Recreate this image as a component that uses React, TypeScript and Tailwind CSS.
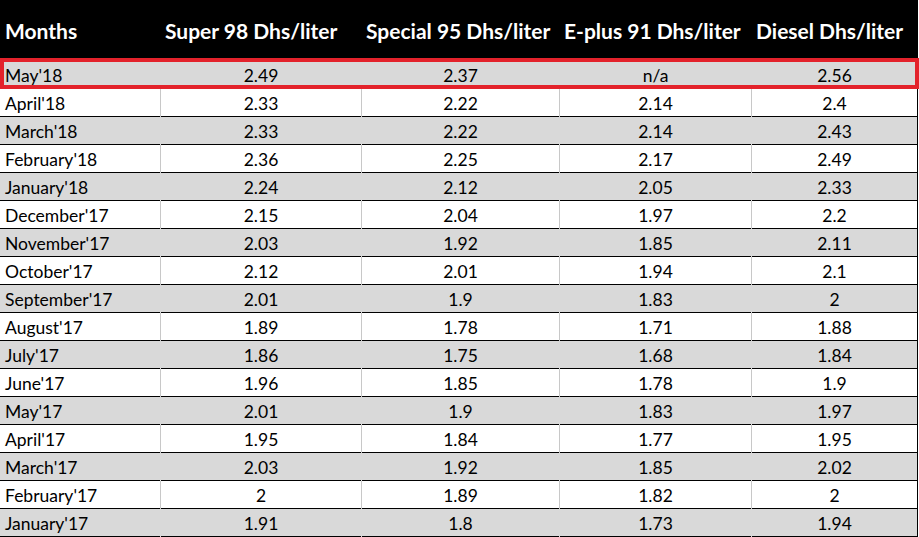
const headers = ['Months', 'Super 98 Dhs/liter', 'Special 95 Dhs/liter', 'E-plus 91 Dhs/liter', 'Diesel Dhs/liter'];

const rows: string[][] = [
  ["May'18", '2.49', '2.37', 'n/a', '2.56'],
  ["April'18", '2.33', '2.22', '2.14', '2.4'],
  ["March'18", '2.33', '2.22', '2.14', '2.43'],
  ["February'18", '2.36', '2.25', '2.17', '2.49'],
  ["January'18", '2.24', '2.12', '2.05', '2.33'],
  ["December'17", '2.15', '2.04', '1.97', '2.2'],
  ["November'17", '2.03', '1.92', '1.85', '2.11'],
  ["October'17", '2.12', '2.01', '1.94', '2.1'],
  ["September'17", '2.01', '1.9', '1.83', '2'],
  ["August'17", '1.89', '1.78', '1.71', '1.88'],
  ["July'17", '1.86', '1.75', '1.68', '1.84'],
  ["June'17", '1.96', '1.85', '1.78', '1.9'],
  ["May'17", '2.01', '1.9', '1.83', '1.97'],
  ["April'17", '1.95', '1.84', '1.77', '1.95'],
  ["March'17", '2.03', '1.92', '1.85', '2.02'],
  ["February'17", '2', '1.89', '1.82', '2'],
  ["January'17", '1.91', '1.8', '1.73', '1.94'],
];

const cols = 'grid grid-cols-[160px_201px_198px_192px_166px]';

export default function App() {
  return (
    <div className="relative w-[919px] h-[537px] bg-white overflow-hidden font-['Lato','Open_Sans',sans-serif] text-black">
      <div className={`${cols} h-[61px] w-[918px] bg-black text-white font-bold text-[21px]`}>
        {headers.map((h) => (
          <div key={h} className="flex items-center pl-[5px] whitespace-nowrap">
            {h}
          </div>
        ))}
      </div>

      {rows.map((r, i) => {
        const shaded = i % 2 === 0;
        return (
          <div
            key={r[0]}
            className={`${cols} h-[28px] w-[918px] border-b border-r border-black text-[17.5px] ${
              shaded ? 'bg-[#d9d9d9]' : 'bg-white'
            }`}
          >
            <div className="flex items-center pt-[2px] pl-[5px] whitespace-nowrap">{r[0]}</div>
            {r.slice(1).map((v, j) => (
              <div
                key={j}
                className={`flex items-center justify-center pt-[2px] border-l ${
                  shaded ? 'border-[#d9d9d9]' : 'border-[#c8c8c8]'
                }`}
              >
                {v}
              </div>
            ))}
          </div>
        );
      })}

      {/* red highlight box drawn over the latest month */}
      <div className="absolute left-0 top-[58px] w-[919px] h-[31px] border-4 border-[#e3222b] pointer-events-none" />
    </div>
  );
}
